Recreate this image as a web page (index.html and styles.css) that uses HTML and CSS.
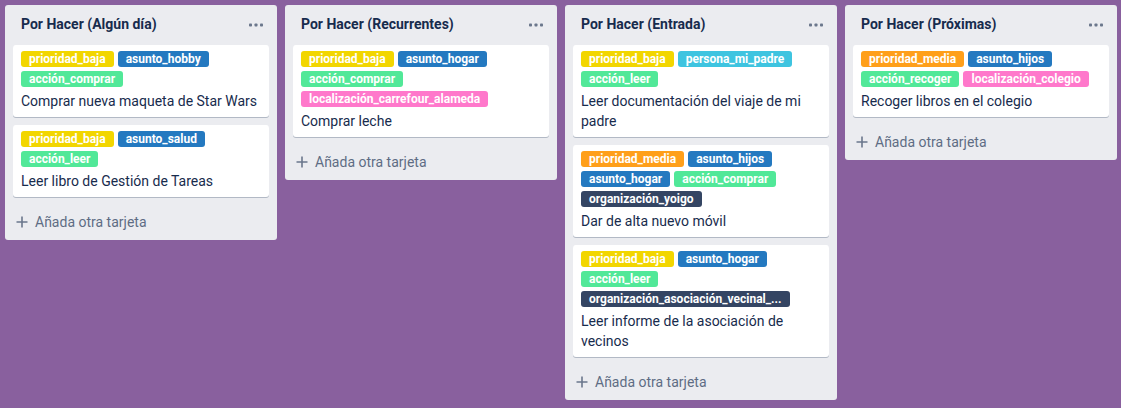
FILE: index.html
```html
<!DOCTYPE html>
<html lang="es">
<head>
<meta charset="utf-8">
<title>Tablero</title>
<link rel="stylesheet" href="styles.css">
</head>
<body>
<div class="board">
  <section class="list">
    <header class="list-header">
      <h2 class="list-title">Por Hacer (Algún día)</h2>
      <svg class="dots" width="14" height="4" viewBox="0 0 14 4"><rect x="0" y="0.5" width="3" height="3" rx="0.8"/><rect x="5.5" y="0.5" width="3" height="3" rx="0.8"/><rect x="11" y="0.5" width="3" height="3" rx="0.8"/></svg>
    </header>
    <div class="cards">
      <div class="card">
        <div class="labels"><span class="label yellow">prioridad_baja</span><span class="label blue">asunto_hobby</span><span class="label green">acción_comprar</span></div>
        <p class="card-title">Comprar nueva maqueta de Star Wars</p>
      </div>
      <div class="card">
        <div class="labels"><span class="label yellow">prioridad_baja</span><span class="label blue">asunto_salud</span><span class="label green">acción_leer</span></div>
        <p class="card-title">Leer libro de Gestión de Tareas</p>
      </div>
    </div>
    <div class="composer"><svg class="plus" width="12" height="12" viewBox="0 0 12 12"><path d="M6 0.5v11M0.5 6h11"/></svg><span>Añada otra tarjeta</span></div>
  </section>

  <section class="list">
    <header class="list-header">
      <h2 class="list-title">Por Hacer (Recurrentes)</h2>
      <svg class="dots" width="14" height="4" viewBox="0 0 14 4"><rect x="0" y="0.5" width="3" height="3" rx="0.8"/><rect x="5.5" y="0.5" width="3" height="3" rx="0.8"/><rect x="11" y="0.5" width="3" height="3" rx="0.8"/></svg>
    </header>
    <div class="cards">
      <div class="card">
        <div class="labels"><span class="label yellow">prioridad_baja</span><span class="label blue">asunto_hogar</span><span class="label green">acción_comprar</span><span class="label pink">localización_carrefour_alameda</span></div>
        <p class="card-title">Comprar leche</p>
      </div>
    </div>
    <div class="composer"><svg class="plus" width="12" height="12" viewBox="0 0 12 12"><path d="M6 0.5v11M0.5 6h11"/></svg><span>Añada otra tarjeta</span></div>
  </section>

  <section class="list">
    <header class="list-header">
      <h2 class="list-title">Por Hacer (Entrada)</h2>
      <svg class="dots" width="14" height="4" viewBox="0 0 14 4"><rect x="0" y="0.5" width="3" height="3" rx="0.8"/><rect x="5.5" y="0.5" width="3" height="3" rx="0.8"/><rect x="11" y="0.5" width="3" height="3" rx="0.8"/></svg>
    </header>
    <div class="cards">
      <div class="card">
        <div class="labels"><span class="label yellow">prioridad_baja</span><span class="label sky">persona_mi_padre</span><span class="label green">acción_leer</span></div>
        <p class="card-title">Leer documentación del viaje de mi padre</p>
      </div>
      <div class="card">
        <div class="labels"><span class="label orange">prioridad_media</span><span class="label blue">asunto_hijos</span><span class="label blue">asunto_hogar</span><span class="label green">acción_comprar</span><span class="label dark">organización_yoigo</span></div>
        <p class="card-title">Dar de alta nuevo móvil</p>
      </div>
      <div class="card">
        <div class="labels"><span class="label yellow">prioridad_baja</span><span class="label blue">asunto_hogar</span><span class="label green">acción_leer</span><span class="label dark">organización_asociación_vecinal_...</span></div>
        <p class="card-title">Leer informe de la asociación de vecinos</p>
      </div>
    </div>
    <div class="composer"><svg class="plus" width="12" height="12" viewBox="0 0 12 12"><path d="M6 0.5v11M0.5 6h11"/></svg><span>Añada otra tarjeta</span></div>
  </section>

  <section class="list">
    <header class="list-header">
      <h2 class="list-title">Por Hacer (Próximas)</h2>
      <svg class="dots" width="14" height="4" viewBox="0 0 14 4"><rect x="0" y="0.5" width="3" height="3" rx="0.8"/><rect x="5.5" y="0.5" width="3" height="3" rx="0.8"/><rect x="11" y="0.5" width="3" height="3" rx="0.8"/></svg>
    </header>
    <div class="cards">
      <div class="card">
        <div class="labels"><span class="label orange">prioridad_media</span><span class="label blue">asunto_hijos</span><span class="label green">acción_recoger</span><span class="label pink">localización_colegio</span></div>
        <p class="card-title">Recoger libros en el colegio</p>
      </div>
    </div>
    <div class="composer"><svg class="plus" width="12" height="12" viewBox="0 0 12 12"><path d="M6 0.5v11M0.5 6h11"/></svg><span>Añada otra tarjeta</span></div>
  </section>
</div>
</body>
</html>
```
FILE: styles.css
```css
* { box-sizing: border-box; }
html, body {
  margin: 0;
  padding: 0;
  background: #89609e;
  font-family: Roboto, "Liberation Sans", sans-serif;
  color: #172b4d;
}
.board {
  display: flex;
  align-items: flex-start;
  gap: 8px;
  padding: 5px 0 0 5px;
}
.list {
  width: 272px;
  flex: 0 0 272px;
  background: #ebecf0;
  border-radius: 3px;
  display: flex;
  flex-direction: column;
}
.list-header {
  display: flex;
  align-items: center;
  justify-content: space-between;
  padding: 9px 14px 11px 16px;
  height: 40px;
}
.list-title {
  margin: 0;
  font-size: 14px;
  line-height: 20px;
  font-weight: 700;
  color: #172b4d;
}
.dots { fill: #6b778c; margin-top: 1px; }
.cards {
  display: flex;
  flex-direction: column;
  gap: 8px;
  padding: 0 8px;
}
.card {
  background: #fff;
  border-radius: 3px;
  box-shadow: 0 1px 0 rgba(9, 30, 66, 0.25);
  padding: 6px 8px;
}
.labels {
  display: flex;
  flex-wrap: wrap;
  gap: 4px 4px;
  margin-bottom: 4px;
}
.label {
  display: block;
  height: 16px;
  line-height: 16px;
  padding: 0 8px;
  border-radius: 3px;
  color: #fff;
  font-size: 12px;
  font-weight: 700;
  white-space: nowrap;
}
.yellow { background: #f2d600; }
.blue { background: #2479c0; }
.green { background: #51e898; }
.pink { background: #ff78cb; }
.orange { background: #ff9f1a; }
.sky { background: #3ec4e0; }
.dark { background: #344563; }
.card-title {
  margin: 0;
  font-size: 14px;
  line-height: 20px;
  color: #172b4d;
}
.composer {
  display: flex;
  align-items: center;
  gap: 7px;
  padding: 15px 8px 8px 11px;
  height: 43px;
  font-size: 14px;
  line-height: 20px;
  color: #5e6c84;
}
.plus { stroke: #6b778c; stroke-width: 1.6; fill: none; }
```
